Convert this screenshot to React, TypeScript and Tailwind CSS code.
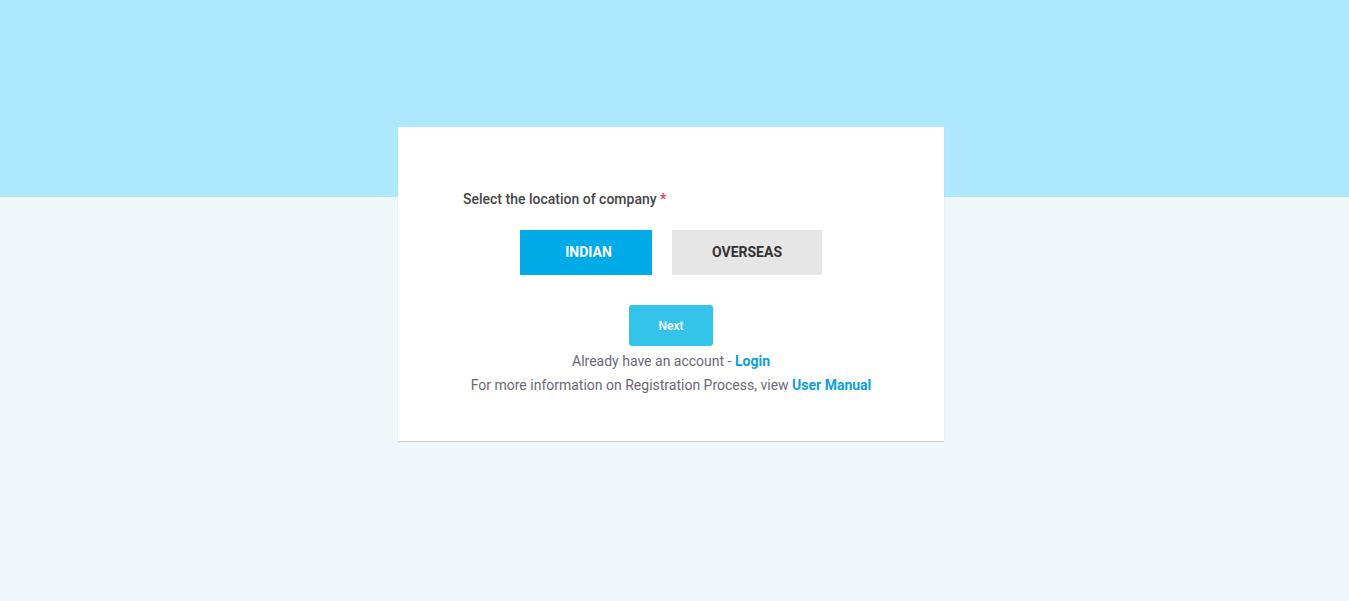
export default function App() {
  return (
    <div className="min-h-[601px] w-full bg-[linear-gradient(to_bottom,#ade8fd_0,#ade8fd_197px,#f0f7fa_197px)] pr-[7px] pt-[127px] font-['Roboto',sans-serif]">
      <div className="mx-auto w-[546px] bg-white px-[65px] pb-[44px] pt-[62px] shadow-[0_1px_1px_#c3d3da]">
        <div className="h-[20px] text-[14px] font-medium leading-[20px] text-[#464646]">
          Select the location of company <span className="text-[#f0314f]">*</span>
        </div>

        {/* Location choice */}
        <div className="mt-[21px] flex justify-center gap-[20px]">
          <button className="h-[45px] w-[132px] bg-[#00abe7] pl-[5px] text-[14px] font-bold text-white">
            INDIAN
          </button>
          <button className="h-[45px] w-[150px] bg-[#e6e6e6] text-[14px] font-bold text-[#333]">
            OVERSEAS
          </button>
        </div>

        <div className="mt-[30px] flex justify-center">
          <button className="h-[41px] w-[84px] rounded-[3px] bg-[#33c3eb] text-[12px] font-medium text-white">
            Next
          </button>
        </div>

        <div className="mt-[3px] text-center text-[14px] leading-[24px] text-[#6c6777]">
          <p>
            Already have an account -{" "}
            <a className="font-bold text-[#0a9fdf]">Login</a>
          </p>
          <p>
            For more information on Registration Process, view{" "}
            <a className="font-bold text-[#0a9fdf]">User Manual</a>
          </p>
        </div>
      </div>
    </div>
  );
}
